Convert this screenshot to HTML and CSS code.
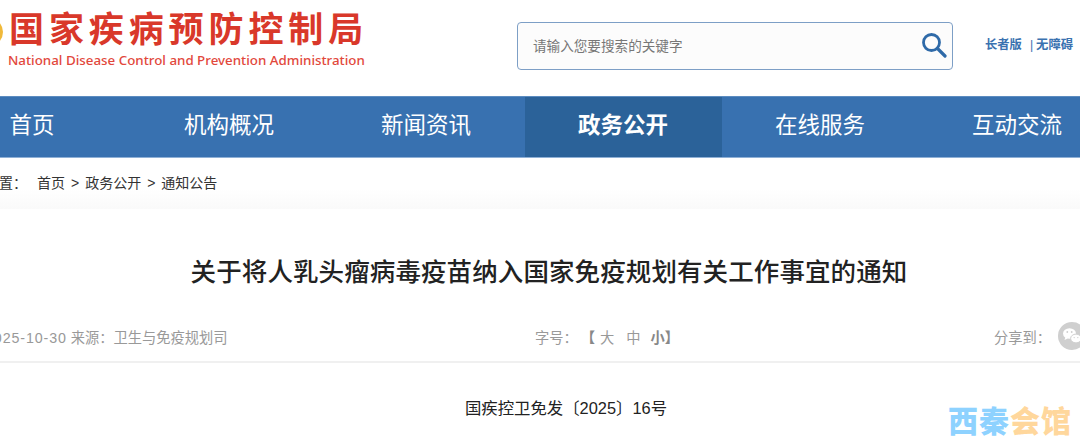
FILE: index.html
```html
<!DOCTYPE html>
<html lang="zh-CN">
<head>
    <meta charset="UTF-8">
    <title>关于将人乳头瘤病毒疫苗纳入国家免疫规划有关工作事宜的通知</title>
    <link rel="stylesheet" href="styles.css">
</head>
<body>
    <header class="top">
        <div class="logo">
            <span class="emblem"></span>
            <div class="logo-text">
                <div class="logo-cn">国家疾病预防控制局</div>
                <div class="logo-en">National Disease Control and Prevention Administration</div>
            </div>
        </div>
        <div class="search">
            <span class="search-text">请输入您要搜索的关键字</span>
            <svg class="search-icon" width="26" height="26" viewBox="0 0 26 26">
                <circle cx="10.5" cy="10.5" r="8" fill="none" stroke="#2f6aa8" stroke-width="2.8"/>
                <path d="M16.5 16.5L24 24" fill="none" stroke="#2f6aa8" stroke-width="3.2" stroke-linecap="round"/>
            </svg>
        </div>
        <div class="top-links">长者版<span class="sep">|</span>无障碍</div>
    </header>

    <nav class="nav">
        <a>首页</a>
        <a>机构概况</a>
        <a>新闻资讯</a>
        <a class="active">政务公开</a>
        <a>在线服务</a>
        <a>互动交流</a>
    </nav>

    <div class="crumb">
        <span class="crumb-label">当前位置：</span>
        <span class="crumb-path">首页 &gt; 政务公开 &gt; 通知公告</span>
    </div>

    <main class="article">
        <h1 class="title">关于将人乳头瘤病毒疫苗纳入国家免疫规划有关工作事宜的通知</h1>
        <div class="meta">
            <div class="meta-left"><span class="date">2025-10-30</span> 来源：卫生与免疫规划司</div>
            <div class="meta-size">字号： <b>【</b><i>大</i><i>中</i><b>小</b><b>】</b></div>
            <div class="meta-share">
                <span>分享到：</span>
                <svg class="wechat" width="28" height="28" viewBox="0 0 28 28">
                    <circle cx="14" cy="14" r="14" fill="#cfcfcf"/>
                    <ellipse cx="11.5" cy="11.5" rx="6.5" ry="5.3" fill="#fff"/>
                    <path d="M7.5 15l-1 3 3.2-1.6z" fill="#fff"/>
                    <ellipse cx="18" cy="16.5" rx="5.4" ry="4.4" fill="#fff" stroke="#cfcfcf"/>
                    <circle cx="9.3" cy="10" r=".9" fill="#cfcfcf"/>
                    <circle cx="13.7" cy="10" r=".9" fill="#cfcfcf"/>
                    <circle cx="16.2" cy="15.6" r=".7" fill="#cfcfcf"/>
                    <circle cx="19.8" cy="15.6" r=".7" fill="#cfcfcf"/>
                </svg>
            </div>
        </div>
        <p class="doc-no">国疾控卫免发〔2025〕16号</p>
    </main>

    <div class="watermark"><span class="wm-blue">西秦</span><span class="wm-orange">会馆</span></div>
</body>
</html>
```

FILE: styles.css
```css
* {
    box-sizing: border-box;
}

html, body {
    margin: 0;
    height: 442px;
    overflow: hidden;
}

body {
    position: relative;
    background-color: #fff;
    font-family: "Liberation Sans", "Noto Sans CJK SC", sans-serif;
}

.top {
    display: flex;
    align-items: flex-start;
    height: 95px;
}

.logo {
    display: flex;
    width: 517px;
    padding-top: 8px;
}

.emblem {
    flex: none;
    width: 28px;
    height: 28px;
    margin: 10px 10px 0 -25px;
    border-radius: 50%;
    background-color: #f0b93a;
}

.logo-text {
    margin-left: -5px;
}

.logo-cn {
    height: 38px;
    margin-left: 1px;
    font-family: "Noto Sans CJK SC", sans-serif;
    font-size: 35px;
    font-weight: 700;
    line-height: 38px;
    letter-spacing: 4.9px;
    white-space: nowrap;
    color: #d9382a;
}

.logo-en {
    margin-top: 5px;
    font-family: "Noto Sans", sans-serif;
    font-size: 13.35px;
    font-weight: 500;
    line-height: 18px;
    white-space: nowrap;
    color: #e2483c;
}

.search {
    display: flex;
    justify-content: space-between;
    align-items: center;
    width: 436px;
    height: 48px;
    margin-top: 22px;
    padding: 0 5px 3px 15px;
    border: 1.5px solid #7d9fc6;
    border-radius: 4px;
    background-color: #fcfcfc;
}

.search-text {
    font-size: 13.6px;
    color: #777;
}

.top-links {
    margin: 37px 0 0 32px;
    font-size: 12.3px;
    font-weight: 700;
    line-height: 16px;
    white-space: nowrap;
    color: #3a72b0;
}

.sep {
    margin: 0 3px 0 8px;
    font-weight: 400;
}

.nav {
    display: grid;
    grid-template-columns: repeat(6, 197px);
    height: 62px;
    margin-top: 1px;
    margin-left: -66.5px;
    border-top: 1px solid #5c8cc0;
    border-bottom: 1px solid #8fb0d6;
    background-color: #3871b0;
}

.nav a {
    font-size: 22.5px;
    line-height: 58px;
    text-align: center;
    color: #fff;
}

.nav .active {
    font-weight: 700;
    background-color: #2b6299;
}

.crumb {
    display: flex;
    gap: 10px;
    height: 51px;
    margin-left: -43px;
    padding-top: 15px;
    font-size: 14px;
    line-height: 20px;
    color: #333;
    background: linear-gradient(#fff 60%, #fafafa);
}

.crumb-path {
    word-spacing: 2.1px;
}

.title {
    margin: 0 0 0 18px;
    padding-top: 44px;
    font-family: "Noto Sans CJK SC", sans-serif;
    font-size: 25.5px;
    font-weight: 500;
    line-height: 34px;
    letter-spacing: .1px;
    text-align: center;
    color: #222;
}

.meta {
    display: flex;
    align-items: center;
    height: 49px;
    margin: 27px -6px 0 -15px;
    padding-bottom: 3px;
    border-bottom: 2px solid #f0f0f0;
    font-size: 14.25px;
    color: #999;
}

.meta-left {
    width: 550px;
}

.date {
    letter-spacing: .9px;
}

.meta-size b {
    font-weight: 700;
    color: #888;
}

.meta-size i {
    margin: 0 6px;
    font-style: normal;
    color: #999;
}

.meta-size b:first-of-type {
    margin-left: -1px;
}

.meta-size b + i {
    margin-left: 5px;
}

.meta-size i + b {
    margin-left: 4px;
}

.meta-share {
    display: flex;
    align-items: center;
    gap: 7px;
    margin-left: auto;
}

.wechat {
    flex: none;
}

.doc-no {
    margin: 35px 0 0 52px;
    font-size: 16.4px;
    line-height: 20px;
    text-align: center;
    color: #222;
}

.watermark {
    position: absolute;
    right: 8px;
    bottom: 7px;
    font-family: "Noto Sans CJK SC", sans-serif;
    font-size: 30px;
    font-weight: 900;
    line-height: 32px;
    letter-spacing: 1px;
}

.wm-blue {
    color: #8ed2ff;
}

.wm-orange {
    color: #ffd79c;
}
```
